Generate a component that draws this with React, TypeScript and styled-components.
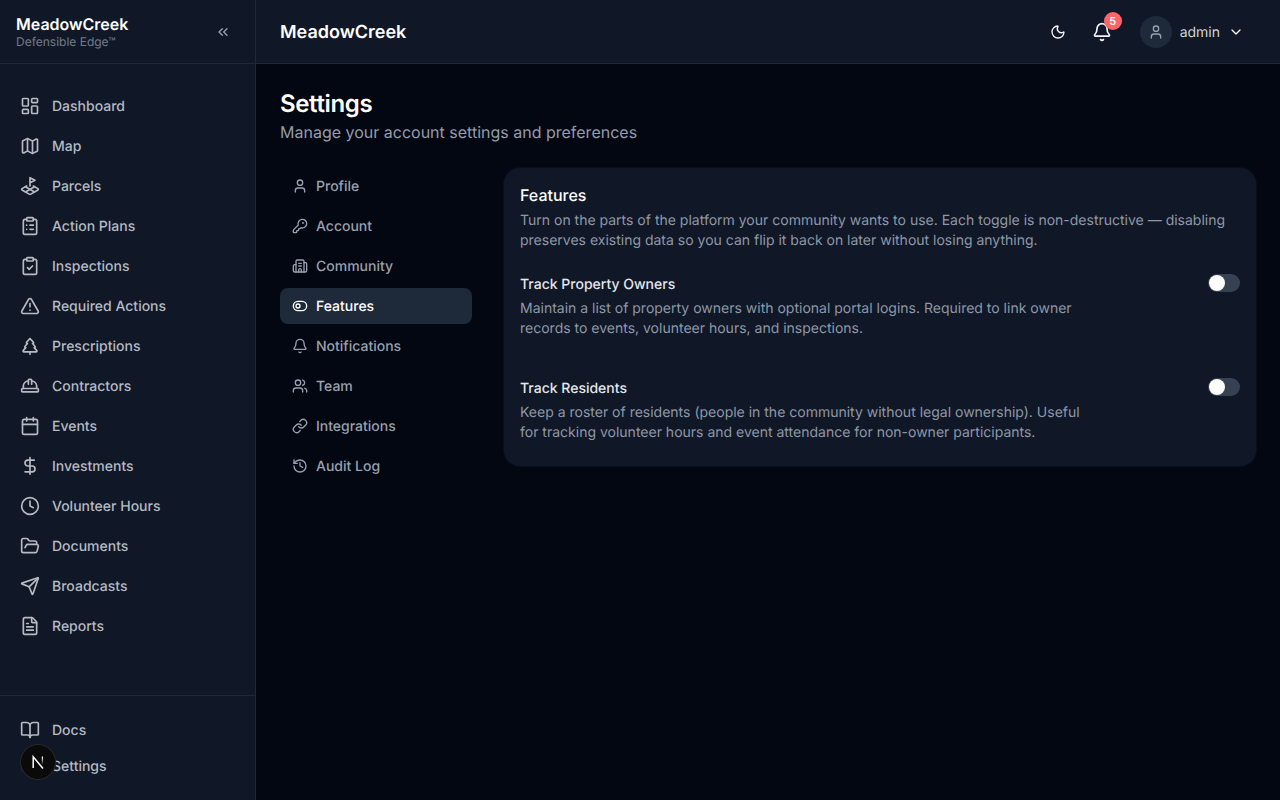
import React from "react";
import styled, { createGlobalStyle } from "styled-components";
import {
  Bell, BookOpen, Building2, Calendar, ChevronDown, ChevronsLeft, ClipboardCheck, ClipboardList, Clock,
  DollarSign, FileText, FolderOpen, HardHat, History, KeyRound, LandPlot, LayoutDashboard, Link,
  Map as MapIcon, Moon, Send, Settings, ToggleLeft, TreePine, TriangleAlert, User, Users,
} from "lucide-react";

const mainNav = [
  { label: "Dashboard", icon: LayoutDashboard },
  { label: "Map", icon: MapIcon },
  { label: "Parcels", icon: LandPlot },
  { label: "Action Plans", icon: ClipboardList },
  { label: "Inspections", icon: ClipboardCheck },
  { label: "Required Actions", icon: TriangleAlert },
  { label: "Prescriptions", icon: TreePine },
  { label: "Contractors", icon: HardHat },
  { label: "Events", icon: Calendar },
  { label: "Investments", icon: DollarSign },
  { label: "Volunteer Hours", icon: Clock },
  { label: "Documents", icon: FolderOpen },
  { label: "Broadcasts", icon: Send },
  { label: "Reports", icon: FileText },
];

const settingsNav = [
  { label: "Profile", icon: User },
  { label: "Account", icon: KeyRound },
  { label: "Community", icon: Building2 },
  { label: "Features", icon: ToggleLeft, active: true },
  { label: "Notifications", icon: Bell },
  { label: "Team", icon: Users },
  { label: "Integrations", icon: Link },
  { label: "Audit Log", icon: History },
];

const features = [
  {
    title: "Track Property Owners",
    text: "Maintain a list of property owners with optional portal logins. Required to link owner records to events, volunteer hours, and inspections.",
  },
  {
    title: "Track Residents",
    text: "Keep a roster of residents (people in the community without legal ownership). Useful for tracking volunteer hours and event attendance for non-owner participants.",
  },
];

const GlobalStyle = createGlobalStyle`
  html, body { margin: 0; height: 100%; background: #030712; }
  body {
    font-family: Inter, "Liberation Sans", sans-serif;
    text-rendering: geometricPrecision;
    -webkit-font-smoothing: antialiased;
    overflow: hidden;
  }
  * { box-sizing: border-box; }
`;

const Shell = styled.div`
  display: flex;
  height: 800px;
  background: #030712;
`;

const Sidebar = styled.aside`
  width: 256px;
  flex-shrink: 0;
  display: flex;
  flex-direction: column;
  background: #101828;
  border-right: 1px solid #1e2939;
`;

const Brand = styled.div`
  height: 64px;
  flex-shrink: 0;
  display: flex;
  align-items: center;
  justify-content: space-between;
  padding: 0 24px 0 16px;
  border-bottom: 1px solid #1e2939;
`;

const BrandName = styled.div`
  font-size: 16px;
  line-height: 20px;
  font-weight: 600;
  color: #fff;
`;

const BrandSub = styled.div`
  font-size: 12px;
  line-height: 16px;
  color: #737b8a;
`;

const Collapse = styled.span`
  display: flex;
  color: #99a1af;
`;

const SideNav = styled.nav`
  flex: 1;
  display: flex;
  flex-direction: column;
  gap: 4px;
  padding: 24px 8px 0;
`;

const SideFoot = styled.div`
  display: flex;
  flex-direction: column;
  padding: 16px 8px;
  border-top: 1px solid #1e2939;
`;

const SideItem = styled.a`
  height: 36px;
  display: flex;
  align-items: center;
  gap: 12px;
  padding: 0 12px;
  font-size: 14px;
  font-weight: 500;
  color: #b5bac3;
`;

const Main = styled.div`
  flex: 1;
  min-width: 0;
  display: flex;
  flex-direction: column;
`;

const Header = styled.header`
  height: 64px;
  flex-shrink: 0;
  display: flex;
  align-items: center;
  justify-content: space-between;
  padding: 0 24px;
  background: #101828;
  border-bottom: 1px solid #1e2939;
`;

const HeaderTitle = styled.div`
  padding-top: 1px;
  font-size: 18px;
  font-weight: 600;
  color: #fff;
`;

const HeaderRight = styled.div`
  display: flex;
  align-items: center;
  color: #f3f4f6;
`;

const IconBtn = styled.span`
  position: relative;
  width: 36px;
  height: 36px;
  margin-right: 8px;
  display: flex;
  align-items: center;
  justify-content: center;
`;

const Badge = styled.span`
  position: absolute;
  top: -2px;
  right: -2px;
  width: 18px;
  height: 18px;
  border-radius: 50%;
  display: flex;
  align-items: center;
  justify-content: center;
  background: #ff6467;
  color: #fff;
  font-size: 11px;
  font-weight: 600;
`;

const UserMenu = styled.div`
  display: flex;
  align-items: center;
  gap: 8px;
  padding: 0 12px;
`;

const Avatar = styled.span`
  width: 32px;
  height: 32px;
  border-radius: 50%;
  display: flex;
  align-items: center;
  justify-content: center;
  background: #1e2939;
  color: #99a1af;
`;

const UserName = styled.span`
  padding-top: 1px;
  font-size: 14px;
  font-weight: 400;
  color: #d1d5dc;
`;

const Content = styled.main`
  flex: 1;
  padding: 24px;
`;

const PageTitle = styled.h1`
  margin: 0;
  font-size: 24px;
  line-height: 32px;
  font-weight: 600;
  letter-spacing: -0.35px;
  color: #fff;
`;

const PageSub = styled.p`
  margin: 0;
  font-size: 16px;
  line-height: 24px;
  color: #949cab;
`;

const Columns = styled.div`
  display: flex;
  align-items: flex-start;
  gap: 32px;
  margin-top: 24px;
`;

const Tabs = styled.nav`
  width: 192px;
  flex-shrink: 0;
  display: flex;
  flex-direction: column;
  gap: 4px;
`;

const Tab = styled.a<{ $active?: boolean }>`
  height: 36px;
  display: flex;
  align-items: center;
  gap: 8px;
  padding: 0 12px;
  border-radius: 8px;
  font-size: 14px;
  font-weight: 500;
  color: ${(p) => (p.$active ? "#fff" : "#99a1af")};
  background: ${(p) => (p.$active ? "#1e2939" : "transparent")};
`;

const Card = styled.section`
  flex: 1;
  min-width: 0;
  padding: 16px 16px 23px;
  background: #101828;
  box-shadow: 0 0 0 1px rgba(255, 255, 255, 0.03);
  border-radius: 16px;
`;

const CardTitle = styled.h2`
  margin: 0;
  font-size: 16px;
  line-height: 22px;
  font-weight: 500;
  color: #fff;
`;

const CardText = styled.p`
  margin: 5px 0 0;
  font-size: 14px;
  line-height: 20px;
  color: #8f97a6;
`;

const Feature = styled.div`
  display: flex;
  justify-content: space-between;
  align-items: flex-start;
  margin-top: 23px;
  & + & { margin-top: 39px; }
`;

const FeatureBody = styled.div`
  max-width: 576px;
  padding-top: 1px;
`;

const FeatureTitle = styled.div`
  font-size: 14px;
  line-height: 20px;
  font-weight: 500;
  color: #e5e7eb;
`;

const FeatureText = styled.p`
  margin: 4px 0 0;
  font-size: 14px;
  line-height: 20px;
  color: #8f97a6;
`;

const Toggle = styled.span`
  flex-shrink: 0;
  width: 32px;
  height: 18px;
  padding: 1px;
  border-radius: 9px;
  background: #364153;
`;

const Knob = styled.span`
  display: block;
  width: 16px;
  height: 16px;
  border-radius: 50%;
  background: #fff;
`;

const DevBadge = styled.div`
  position: fixed;
  left: 20px;
  top: 744px;
  width: 36px;
  height: 36px;
  border-radius: 50%;
  display: flex;
  align-items: center;
  justify-content: center;
  background: #0a0a0a;
  box-shadow: inset 0 0 0 1px #2a2a2a;
`;

export default function App() {
  return (
    <>
      <GlobalStyle />
      <Shell>
        <Sidebar>
          <Brand>
            <div>
              <BrandName>MeadowCreek</BrandName>
              <BrandSub>Defensible Edge™</BrandSub>
            </div>
            <Collapse><ChevronsLeft size={16} /></Collapse>
          </Brand>
          <SideNav>
            {mainNav.map((i) => (
              <SideItem key={i.label}><i.icon size={20} />{i.label}</SideItem>
            ))}
          </SideNav>
          <SideFoot>
            <SideItem><BookOpen size={20} />Docs</SideItem>
            <SideItem><Settings size={20} />Settings</SideItem>
          </SideFoot>
        </Sidebar>
        <Main>
          <Header>
            <HeaderTitle>MeadowCreek</HeaderTitle>
            <HeaderRight>
              <IconBtn><Moon size={16} /></IconBtn>
              <IconBtn><Bell size={20} /><Badge>5</Badge></IconBtn>
              <UserMenu>
                <Avatar><User size={16} /></Avatar>
                <UserName>admin</UserName>
                <ChevronDown size={16} />
              </UserMenu>
            </HeaderRight>
          </Header>
          <Content>
            <PageTitle>Settings</PageTitle>
            <PageSub>Manage your account settings and preferences</PageSub>
            <Columns>
              <Tabs>
                {settingsNav.map((i) => (
                  <Tab key={i.label} $active={i.active}><i.icon size={16} />{i.label}</Tab>
                ))}
              </Tabs>
              <Card>
                <CardTitle>Features</CardTitle>
                <CardText>
                  Turn on the parts of the platform your community wants to use. Each toggle is non-destructive — disabling preserves existing data so you can flip it back on later without losing anything.
                </CardText>
                {features.map((f) => (
                  <Feature key={f.title}>
                    <FeatureBody>
                      <FeatureTitle>{f.title}</FeatureTitle>
                      <FeatureText>{f.text}</FeatureText>
                    </FeatureBody>
                    <Toggle><Knob /></Toggle>
                  </Feature>
                ))}
              </Card>
            </Columns>
          </Content>
        </Main>
      </Shell>
      <DevBadge>
        <svg width="16" height="16" viewBox="0 0 16 16" fill="none">
          <defs>
            <linearGradient id="nextFade" x1="12" y1="3" x2="12" y2="11" gradientUnits="userSpaceOnUse">
              <stop stopColor="#fff" />
              <stop offset="1" stopColor="#fff" stopOpacity="0" />
            </linearGradient>
          </defs>
          <path d="M3.2 14V2.8L13 14.5" stroke="#fff" strokeWidth="1.5" />
          <path d="M12.4 2.5v8" stroke="url(#nextFade)" strokeWidth="1.3" />
        </svg>
      </DevBadge>
    </>
  );
}
